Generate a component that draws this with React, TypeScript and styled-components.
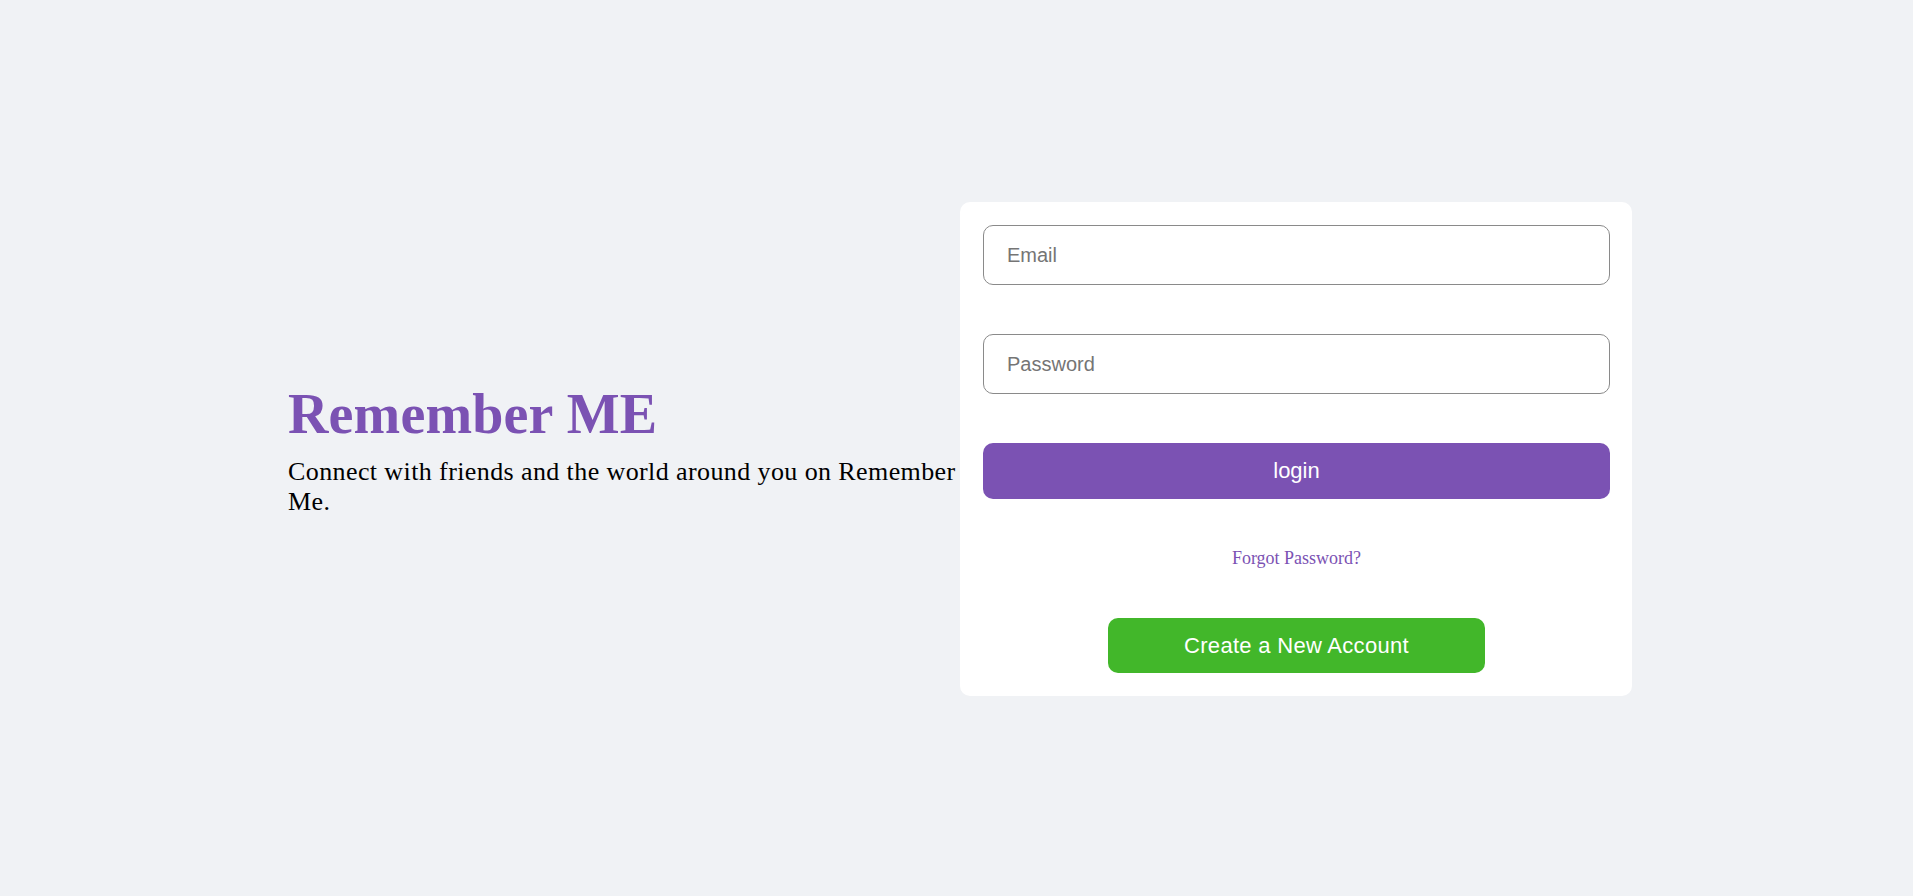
import React from "react";
import styled, { createGlobalStyle } from "styled-components";

const GlobalStyle = createGlobalStyle`
  * { box-sizing: border-box; }
  html, body { margin: 0; padding: 0; background: #f0f2f5; }
  body { font-family: "Liberation Serif", "Times New Roman", serif; }
`;

const Page = styled.main`
  min-height: 100vh;
  display: grid;
  grid-template-columns: 672px 672px;
  justify-content: center;
  align-items: center;
  padding: 2px 0 0 7px;
`;

const Intro = styled.section`
  display: flex;
  flex-direction: column;
`;

const Title = styled.h1`
  margin: 0 0 11px;
  font-family: "Liberation Serif", "Times New Roman", serif;
  font-size: 56px;
  font-weight: 700;
  line-height: normal;
  letter-spacing: 0.15px;
  color: #7b52b3;
`;

const Tagline = styled.p`
  margin: 0;
  font-family: "Liberation Serif", "Times New Roman", serif;
  font-size: 26px;
  line-height: normal;
  letter-spacing: 0.4px;
  color: #000;
`;

const Card = styled.form`
  background: #ffffff;
  border-radius: 10px;
  padding: 23px 22px 23px 23px;
  display: flex;
  flex-direction: column;
  align-items: center;
  gap: 49px;
`;

const Field = styled.input`
  width: 100%;
  height: 60px;
  padding: 0 23px;
  border: 1px solid #8a8a8a;
  border-radius: 10px;
  font-family: "Liberation Sans", Arial, sans-serif;
  font-size: 20px;
  color: #333;
  background: #fff;
  outline: none;
  &::placeholder { color: #757575; }
`;

const Button = styled.button<{ $variant: "primary" | "success" }>`
  width: ${(p) => (p.$variant === "primary" ? "100%" : "60%")};
  height: ${(p) => (p.$variant === "primary" ? "56px" : "55px")};
  border: none;
  border-radius: 10px;
  background: ${(p) => (p.$variant === "primary" ? "#7b52b3" : "#42b72a")};
  color: #ffffff;
  font-family: "Liberation Sans", Arial, sans-serif;
  font-size: 22px;
  letter-spacing: ${(p) => (p.$variant === "primary" ? "0" : "0.3px")};
  cursor: pointer;
`;

const Forgot = styled.a`
  font-family: "Liberation Serif", "Times New Roman", serif;
  font-size: 18px;
  line-height: normal;
  color: #7b52b3;
  text-decoration: none;
`;

export default function App() {
  return (
    <>
      <GlobalStyle />
      <Page>
        <Intro>
          <Title>Remember ME</Title>
          <Tagline>Connect with friends and the world around you on Remember Me.</Tagline>
        </Intro>
        <Card onSubmit={(e) => e.preventDefault()}>
          <Field type="email" placeholder="Email" />
          <Field type="password" placeholder="Password" />
          <Button type="submit" $variant="primary">login</Button>
          <Forgot href="#">Forgot Password?</Forgot>
          <Button type="button" $variant="success">Create a New Account</Button>
        </Card>
      </Page>
    </>
  );
}
